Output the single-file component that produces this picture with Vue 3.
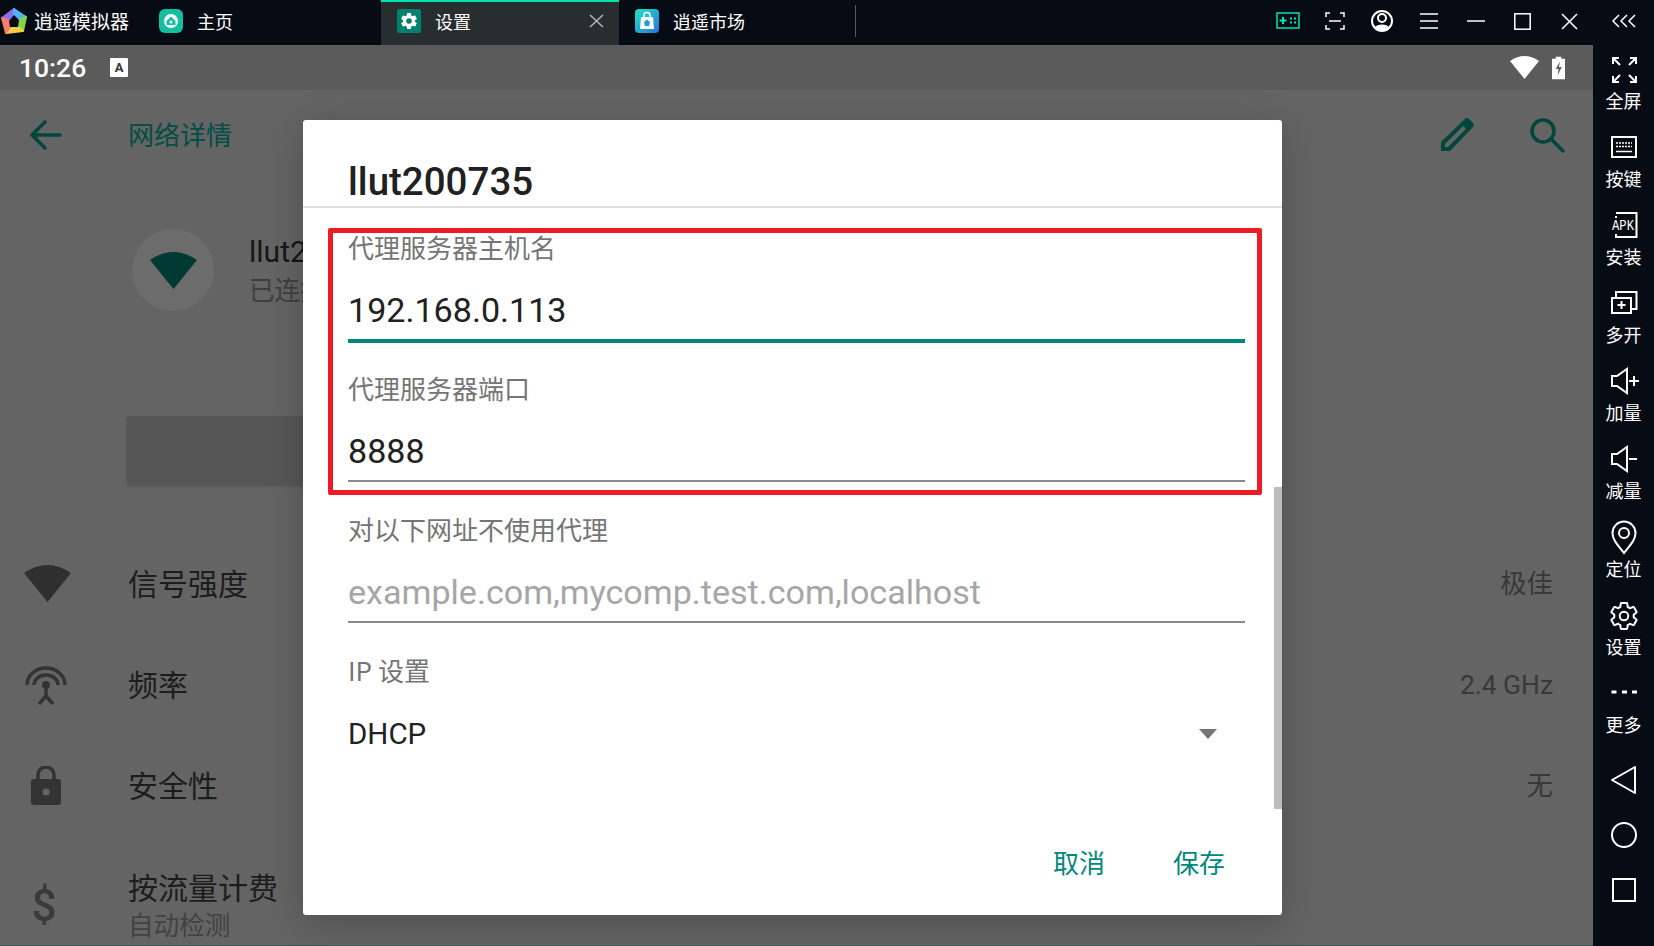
<script setup>
const gear = "M19.43 12.98c.04-.32.07-.64.07-.98s-.03-.66-.07-.98l2.11-1.65c.19-.15.24-.42.12-.64l-2-3.46c-.12-.22-.39-.3-.61-.22l-2.49 1c-.52-.4-1.08-.73-1.69-.98l-.38-2.65C14.46 2.18 14.25 2 14 2h-4c-.25 0-.46.18-.49.42l-.38 2.65c-.61.25-1.17.59-1.69.98l-2.49-1c-.23-.09-.49 0-.61.22l-2 3.46c-.13.22-.07.49.12.64l2.11 1.65c-.04.32-.07.65-.07.98s.03.66.07.98l-2.11 1.65c-.19.15-.24.42-.12.64l2 3.46c.12.22.39.3.61.22l2.49-1c.52.4 1.08.73 1.69.98l.38 2.65c.03.24.24.42.49.42h4c.25 0 .46-.18.49-.42l.38-2.65c.61-.25 1.17-.59 1.69-.98l2.49 1c.23.09.49 0 .61-.22l2-3.46c.12-.22.07-.49-.12-.64l-2.11-1.65z"

const sideItems = [
  { label: '全屏', icon: '<path d="M9 14V8h6M9 8l7 7M32 14V8h-6M32 8l-7 7M9 26v6h6M9 32l7-7M32 26v6h-6M32 32l-7-7"/>' },
  { label: '按键', icon: '<rect x="8" y="9" width="24" height="20"/><path d="M12 15h16M12 18.500h16" stroke-width="1.500" stroke-dasharray="2 1"/><path d="M12 23.500h16" stroke-width="1.500"/>' },
  { label: '安装', icon: '<path d="M12 7h20.500v24H12v-3"/><path d="M12 13v-3" /><rect x="7" y="12" width="24" height="14" fill="#070b14" stroke="none"/><text x="8" y="24" font-size="15" fill="#fff" stroke="none" font-family="Liberation Mono" textLength="22" lengthAdjust="spacingAndGlyphs">APK</text>' },
  { label: '多开', icon: '<path d="M12 14V8h20.500v17H27"/><rect x="8" y="14" width="19" height="15"/><path d="M17.500 17v8M13.500 21h8"/>' },
  { label: '加量', icon: '<path d="M8 14h5L23 7v24L13 24H8zM25 19h10M30 14v10"/>' },
  { label: '减量', icon: '<path d="M8 14h5L23 7v24L13 24H8zM25 19h8"/>' },
  { label: '定位', icon: '<path d="M20 35C14 27 8.500 22 8.500 15a11.500 11.500 0 0 1 23 0C31.500 22 26 27 20 35z"/><circle cx="20" cy="15" r="5"/>' },
  { label: '设置', icon: `<g transform="translate(4.400 4.400) scale(1.3)"><path stroke-width="1.500" d="${gear}"/><circle cx="12" cy="12" r="3.300" stroke-width="1.500"/></g>` },
  { label: '更多', icon: '<path d="M7.500 18h5M18 18h5M28 18h5" stroke-width="3"/>' },
]

const rows = [
  { name: '信号强度', value: '极佳', kind: 'wifi' },
  { name: '频率', value: '2.4 GHz', kind: 'antenna', latin: true },
  { name: '安全性', value: '无', kind: 'lock' },
]
</script>

<template>
  <div class="root">
    <header class="topbar">
      <div class="brand">
        <svg width="28" height="28" viewBox="0 0 28 28" stroke-linejoin="round">
          <polygon points="14,2 2,11 9,14 14,8" fill="#8f6ff0" stroke="#8f6ff0" stroke-width="2"/>
          <polygon points="14,2 26,10 19,13 14,8" fill="#4fb2f5" stroke="#4fb2f5" stroke-width="2"/>
          <polygon points="26,10 23,24 18,20 19,13" fill="#86d34a" stroke="#86d34a" stroke-width="2"/>
          <polygon points="23,24 6,26 10,20 18,20" fill="#f0cf45" stroke="#f0cf45" stroke-width="2"/>
          <polygon points="2,11 6,26 10,20 9,14" fill="#f57f6c" stroke="#f57f6c" stroke-width="2"/>
          <polygon points="14,8 19,13 18,20 10,20 9,14" fill="#070b14"/>
        </svg>
        <span>逍遥模拟器</span>
      </div>
      <div class="tab">
        <svg class="tabicon" width="24" height="24" viewBox="0 0 24 24">
          <rect width="24" height="24" rx="6" fill="#14bfa0"/>
          <circle cx="12" cy="12" r="7" fill="#fff"/>
          <path d="M12 7.500l4.500 4.500v4h-9v-4z" fill="#14bfa0"/>
          <circle cx="12" cy="13" r="1.500" fill="#fff"/>
        </svg>
        <span>主页</span>
      </div>
      <div class="tab active">
        <svg class="tabicon" width="24" height="24" viewBox="0 0 24 24">
          <rect width="24" height="24" rx="2" fill="#00806f"/>
          <g transform="translate(2.400 2.400) scale(.8)">
            <path :d="gear" fill="#fff"/>
            <circle cx="12" cy="12" r="3.500" fill="#00806f"/>
          </g>
        </svg>
        <span>设置</span>
        <svg class="tabclose" width="15" height="14" viewBox="0 0 15 14">
          <path d="M1 1l13 12M14 1L1 13" stroke="#b4b8bb" stroke-width="1.500" fill="none"/>
        </svg>
      </div>
      <div class="tab last">
        <svg class="tabicon" width="24" height="24" viewBox="0 0 24 24">
          <defs>
            <linearGradient id="shop" x1="0" y1="0" x2="1" y2="1">
              <stop offset="0" stop-color="#1ce8c0"/>
              <stop offset="1" stop-color="#2a73e0"/>
            </linearGradient>
          </defs>
          <rect width="24" height="24" rx="4" fill="url(#shop)"/>
          <path d="M6 8h12l1 12H5z" fill="#fff"/>
          <path d="M9 8V6.500a3 3 0 0 1 6 0V8" stroke="#fff" stroke-width="1.500" fill="none"/>
          <path d="M12 10.500l3 2.500-1 4h-4l-1-4z" fill="#1c9fd0"/>
        </svg>
        <span>逍遥市场</span>
      </div>
      <div class="tabsep"></div>
      <div class="winbtns">
        <span class="winbtn">
          <svg width="24" height="18" viewBox="0 0 24 18" fill="none" stroke="#00e5b0">
            <rect x="1" y="1" width="22" height="15" stroke-width="1.500"/>
            <path d="M7 5v7M3.500 8.500h7" stroke-width="2"/>
            <path d="M14 6.500h2M18 6.500h2M14 10.500h2M18 10.500h2" stroke-width="2"/>
          </svg>
        </span>
        <span class="winbtn">
          <svg width="20" height="18" viewBox="0 0 20 18" fill="none" stroke="#fff" stroke-width="1.500">
            <path d="M1 5V1h4M15 1h4v4M1 13v4h4M15 17h4v-4M4 9h12"/>
          </svg>
        </span>
        <span class="winbtn">
          <svg width="24" height="24" viewBox="0 0 24 24">
            <circle cx="12" cy="12" r="10" fill="none" stroke="#fff" stroke-width="2"/>
            <circle cx="12" cy="9" r="4" fill="none" stroke="#fff" stroke-width="2"/>
            <path d="M4.500 18.500C7 14.500 17 14.500 19.500 18.500A10 10 0 0 1 4.500 18.500z" fill="#fff"/>
          </svg>
        </span>
        <span class="winbtn">
          <svg width="20" height="18" viewBox="0 0 20 18" stroke="#fff" stroke-width="1.500"><path d="M1 2h18M1 9h18M1 16h18"/></svg>
        </span>
        <span class="winbtn">
          <svg width="18" height="4" viewBox="0 0 18 4" stroke="#fff" stroke-width="1.500"><path d="M0 2h18"/></svg>
        </span>
        <span class="winbtn">
          <svg width="17" height="17" viewBox="0 0 17 17" fill="none" stroke="#fff" stroke-width="1.500"><rect x=".8" y=".8" width="15.400" height="15.400"/></svg>
        </span>
        <span class="winbtn">
          <svg width="17" height="17" viewBox="0 0 17 17" fill="none" stroke="#fff" stroke-width="1.500"><path d="M1 1l15 15M16 1L1 16"/></svg>
        </span>
      </div>
      <div class="collapse">
        <svg width="26" height="14" viewBox="0 0 26 14" fill="none" stroke="#fff" stroke-width="1.500">
          <path d="M8 1L2 7l6 6M16 1l-6 6 6 6M24 1l-6 6 6 6"/>
        </svg>
      </div>
    </header>

    <div class="main">
      <div class="android">
        <div class="statusbar">
          <span class="time">10:26</span>
          <span class="a-icon">A</span>
          <span class="grow"></span>
          <svg width="29" height="23" viewBox="0 0 47 37"><path d="M0 8Q23.500-8 47 8L23.500 37z" fill="#fff"/></svg>
          <svg class="battery" width="13" height="24" viewBox="0 0 14 24">
            <path d="M4 0h6v2h4v22H0V2h4z" fill="#fff"/>
            <path d="M8.500 5L4 13h3l-1 7 4.500-9H7.500z" fill="#5b5b5b"/>
          </svg>
        </div>

        <div class="appbar">
          <svg class="back" width="32" height="30" viewBox="0 0 32 30" fill="none" stroke="#00463c" stroke-width="3.500" stroke-linecap="round" stroke-linejoin="round">
            <path d="M30 15H3M15 2L2 15l13 13"/>
          </svg>
          <span class="apptitle">网络详情</span>
          <span class="grow"></span>
          <svg class="pencil" width="36" height="36" viewBox="0 0 36 36">
            <path d="M27 1a3 3 0 0 1 3 1l4 4a3 3 0 0 1 0 4L11 34H2v-9z" fill="#00463c"/>
            <path d="M6 27L24 9l3 3L9 30l-3 0z" fill="#646464"/>
          </svg>
          <svg class="search" width="36" height="36" viewBox="0 0 36 36" fill="none" stroke="#00463c" stroke-width="3.500" stroke-linecap="round">
            <circle cx="14" cy="14" r="11"/>
            <path d="M22 22l12 12"/>
          </svg>
        </div>

        <div class="nethead">
          <div class="netcircle">
            <svg width="47" height="37" viewBox="0 0 47 37"><path d="M0 8Q23.500-8 47 8L23.500 37z" fill="#003a32"/></svg>
          </div>
          <div class="netinfo">
            <div class="netname">llut200735</div>
            <div class="netstate">已连接</div>
          </div>
        </div>

        <div class="greybtn"></div>

        <div class="rows">
          <div v-for="row in rows" :key="row.name" class="row">
            <div class="rowicon">
              <svg v-if="row.kind === 'wifi'" width="47" height="37" viewBox="0 0 47 37"><path d="M0 8Q23.500-8 47 8L23.500 37z" fill="#2f2f2f"/></svg>
              <svg v-else-if="row.kind === 'antenna'" class="nudge" width="42" height="40" viewBox="0 0 42 40" fill="none" stroke="#333" stroke-width="3.500">
                <path d="M2 20a19 17 0 0 1 38 0M9 20a12 10 0 0 1 24 0"/>
                <circle cx="21" cy="20" r="4" fill="#333" stroke="none"/>
                <path d="M21 22v8M14 39l7-8 7 8"/>
              </svg>
              <svg v-else class="nudge" width="30" height="39" viewBox="0 0 30 39">
                <path d="M7 14V9a8 8 0 0 1 16 0v5" fill="none" stroke="#333" stroke-width="3.500"/>
                <rect y="13" width="30" height="26" rx="3" fill="#333"/>
                <circle cx="15" cy="26" r="3.500" fill="#646464"/>
              </svg>
            </div>
            <span class="rowname">{{ row.name }}</span>
            <span class="grow"></span>
            <span class="rowvalue" :class="{ latin: row.latin }">{{ row.value }}</span>
          </div>
          <div class="row meter">
            <div class="rowicon"><span class="dollar">$</span></div>
            <div>
              <div class="rowname">按流量计费</div>
              <div class="rowsub">自动检测</div>
            </div>
          </div>
        </div>

        <div class="dialog">
          <div class="dlgtitle">llut200735</div>
          <div class="dlgform">
            <div class="field">
              <div class="flabel">代理服务器主机名</div>
              <div class="fvalue focused">192.168.0.113</div>
            </div>
            <div class="field">
              <div class="flabel">代理服务器端口</div>
              <div class="fvalue">8888</div>
            </div>
            <div class="field">
              <div class="flabel">对以下网址不使用代理</div>
              <div class="fvalue hint">example.com,mycomp.test.com,localhost</div>
            </div>
            <div class="field">
              <div class="flabel">IP 设置</div>
              <div class="fvalue plain">
                <span>DHCP</span>
                <span class="caret"></span>
              </div>
            </div>
          </div>
          <div class="dlgactions">
            <span>取消</span>
            <span>保存</span>
          </div>
          <div class="scrollthumb"></div>
          <div class="redbox"></div>
        </div>
      </div>

      <aside class="sidebar">
        <div v-for="item in sideItems" :key="item.label" class="sideitem">
          <svg width="40" height="40" viewBox="0 0 40 40" fill="none" stroke="#fff" stroke-width="2" v-html="item.icon"></svg>
          <span>{{ item.label }}</span>
        </div>
        <div class="navbtn">
          <svg width="30" height="30" viewBox="0 0 30 30" fill="none" stroke="#fff" stroke-width="2" stroke-linejoin="round"><path d="M26 2v26L3 15z"/></svg>
        </div>
        <div class="navbtn">
          <svg width="28" height="28" viewBox="0 0 28 28" fill="none" stroke="#fff" stroke-width="2"><circle cx="14" cy="14" r="12"/></svg>
        </div>
        <div class="navbtn">
          <svg width="24" height="24" viewBox="0 0 24 24" fill="none" stroke="#fff" stroke-width="2"><rect x="1" y="1" width="22" height="22"/></svg>
        </div>
      </aside>
    </div>
  </div>
</template>

<style>
html, body {
  margin: 0;
  background: #070b14;
  overflow: hidden;
}
</style>

<style scoped>
.root {
  width: 1654px;
  height: 946px;
  display: flex;
  flex-direction: column;
  overflow: hidden;
  font-family: "Noto Sans CJK SC", "Noto Sans", sans-serif;
  color: #fff;
  background: #070b14;
}
.grow {
  flex: 1;
}

/* top bar */
.topbar {
  height: 45px;
  flex: none;
  display: flex;
  align-items: stretch;
  font-size: 18px;
}
.brand {
  width: 143px;
  display: flex;
  align-items: center;
  gap: 6px;
  font-size: 19px;
  white-space: nowrap;
}
.brand svg {
  margin-bottom: 3px;
}
.brand span,
.tab span {
  padding-bottom: 4px;
}
.tab {
  width: 238px;
  box-sizing: border-box;
  padding-left: 16px;
  display: flex;
  align-items: center;
  gap: 14px;
}
.tabicon {
  margin-bottom: 3px;
}
.tab.active {
  background: #282d30;
  box-shadow: inset 0 2px 0 #00e5b0;
}
.tab.last {
  width: 236px;
}
.tabclose {
  margin-left: auto;
  margin-right: 15px;
  margin-bottom: 3px;
}
.tabsep {
  width: 1px;
  height: 32px;
  margin-top: 5px;
  background: #55595e;
}
.winbtns {
  margin-left: auto;
  display: flex;
  padding-bottom: 3px;
}
.winbtn {
  width: 47px;
  display: flex;
  align-items: center;
  justify-content: center;
}
.collapse {
  width: 61px;
  display: flex;
  align-items: center;
  justify-content: center;
  padding-bottom: 3px;
}

/* android screen */
.main {
  flex: 1;
  display: flex;
  min-height: 0;
}
.android {
  width: 1593px;
  position: relative;
  background: #646464;
  border-bottom: 1px solid #2f5f58;
  box-sizing: border-box;
  overflow: hidden;
}
.statusbar {
  height: 45px;
  background: #5b5b5b;
  display: flex;
  align-items: center;
  padding: 0 28px 0 19px;
}
.time {
  font-family: Roboto, sans-serif;
  font-weight: 500;
  font-size: 26.500px;
  width: 91px;
}
.a-icon {
  width: 18px;
  height: 19px;
  background: #fff;
  color: #333;
  font: bold 13px/19px Roboto, sans-serif;
  text-align: center;
  border-radius: 1px;
}
.battery {
  margin-left: 13px;
}
.appbar {
  height: 90px;
  display: flex;
  align-items: center;
  padding-left: 30px;
  padding-right: 28px;
}
.apptitle {
  margin-left: 66px;
  padding-bottom: 4px;
  font-size: 26px;
  color: #004d45;
}
.pencil {
  margin-right: 54px;
}
.nethead {
  height: 180px;
  display: flex;
  align-items: center;
  padding-left: 132px;
}
.netcircle {
  width: 82px;
  height: 82px;
  border-radius: 50%;
  background: #6c6c6c;
  display: flex;
  align-items: center;
  justify-content: center;
}
.netinfo {
  margin-left: 35px;
}
.netname {
  font-family: Roboto, sans-serif;
  font-size: 30px;
  line-height: 38px;
  color: #161616;
}
.netstate {
  font-size: 25.600px;
  line-height: 36px;
  color: #3f3f3f;
}
.greybtn {
  width: 260px;
  height: 69px;
  margin: 56px 0 0 127px;
  background: #565656;
  border-radius: 3px;
  box-shadow: 0 1px 3px rgba(0, 0, 0, .2);
}
.rows {
  margin-top: 48px;
}
.row {
  height: 101px;
  display: flex;
  align-items: center;
  padding-right: 40px;
}
.row.meter {
  margin-top: 18px;
}
.rowicon {
  width: 94px;
  margin-right: 34px;
  display: flex;
  justify-content: center;
  flex: none;
}
.nudge {
  margin-left: -2px;
}
.rowname {
  font-size: 30px;
  line-height: 38px;
  color: #1c1c1c;
}
.row > .rowname {
  padding-bottom: 4px;
}
.rowsub {
  font-size: 25.600px;
  line-height: 38px;
  color: #424242;
}
.rowvalue {
  font-family: Roboto, "Noto Sans CJK SC", sans-serif;
  font-size: 26.400px;
  padding-bottom: 4px;
  color: #383838;
}
.rowvalue.latin {
  padding-bottom: 0;
}
.dollar {
  font-family: Roboto, sans-serif;
  font-weight: 500;
  font-size: 44px;
  line-height: 50px;
  color: #3a3a3a;
  margin-top: 2px;
  margin-right: 6px;
}

/* dialog */
.dialog {
  position: absolute;
  left: 303px;
  top: 75px;
  width: 979px;
  height: 795px;
  box-sizing: border-box;
  background: #fff;
  border-radius: 3px;
  display: flex;
  flex-direction: column;
  box-shadow: 0 8px 36px rgba(0, 0, 0, .22);
}
.dlgtitle {
  height: 88px;
  box-sizing: border-box;
  padding: 41px 0 0 45px;
  border-bottom: 2px solid #e0e0e0;
  font-family: Roboto, sans-serif;
  font-weight: 500;
  font-size: 38.500px;
  line-height: 42px;
  color: #212121;
}
.dlgform {
  flex: 1;
  padding: 22px 37px 0 45px;
}
.field {
  height: 141px;
  box-sizing: border-box;
}
.flabel {
  height: 36px;
  font-size: 26px;
  line-height: 34px;
  color: #757575;
}
.fvalue {
  margin-top: 24px;
  height: 51px;
  box-sizing: border-box;
  line-height: 40px;
  font-family: Roboto, sans-serif;
  font-size: 34.100px;
  color: #212121;
  border-bottom: 2px solid #8a8a8a;
}
.fvalue.focused {
  height: 53px;
  border-bottom: 4px solid #00897b;
}
.fvalue.hint {
  color: #a6a6a6;
}
.fvalue.plain {
  margin-top: 19px;
  border-bottom: none;
  font-size: 29.500px;
  display: flex;
  align-items: center;
  justify-content: space-between;
  padding-right: 28px;
}
.caret {
  width: 0;
  height: 0;
  border-left: 9.500px solid transparent;
  border-right: 9.500px solid transparent;
  border-top: 10px solid #757575;
}
.dlgactions {
  display: flex;
  justify-content: flex-end;
  gap: 68px;
  padding: 0 57px 34px 0;
  font-size: 26px;
  line-height: 38px;
  color: #00897b;
}
.scrollthumb {
  position: absolute;
  right: 0;
  top: 367px;
  width: 8px;
  height: 322px;
  background: #bdbdbd;
}
.redbox {
  position: absolute;
  left: 25px;
  top: 108px;
  width: 934px;
  height: 267px;
  box-sizing: border-box;
  border: 5px solid #ed1c24;
  border-radius: 2px;
  pointer-events: none;
}

/* right side bar */
.sidebar {
  width: 61px;
  padding-top: 5px;
  display: flex;
  flex-direction: column;
  align-items: center;
}
.sideitem {
  height: 78px;
  width: 100%;
  display: flex;
  flex-direction: column;
  align-items: center;
  font-size: 18px;
  line-height: 20px;
}
.navbtn {
  height: 55px;
  display: flex;
  align-items: center;
  justify-content: center;
}
</style>
